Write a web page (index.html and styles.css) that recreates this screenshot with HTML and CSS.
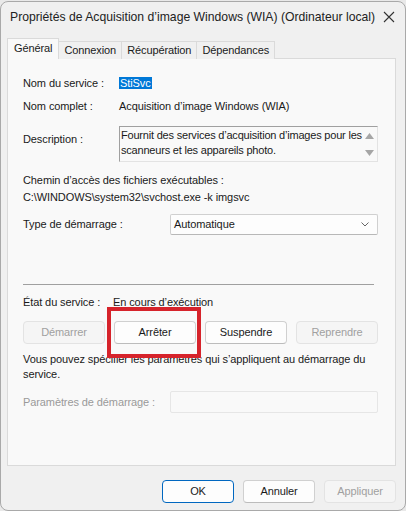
FILE: index.html
```html
<!DOCTYPE html>
<html>
<head>
  <meta charset='utf-8'>
  <title>Propriétés de Acquisition d'image Windows (WIA)</title>
<link rel="stylesheet" href="styles.css">
</head>
<body>
  <div class="window">
    <div class="titlebar">
      <span class="title">Propriétés de Acquisition d’image Windows (WIA) (Ordinateur local)</span>
      <svg class="close" width="12" height="12" viewBox="0 0 12 12"><path d="M1 1L11 11M11 1L1 11" stroke="#333" stroke-width="1.1" fill="none"/></svg>
    </div>
    <div class="tabs">
      <span class="tab active">Général</span>
      <span class="tab">Connexion</span>
      <span class="tab">Récupération</span>
      <span class="tab">Dépendances</span>
    </div>
    <div class="panel">
      <div class="row">
        <span class="label">Nom du service :</span>
        <span class="value"><span class="selected">StiSvc</span></span>
      </div>
      <div class="row">
        <span class="label">Nom complet :</span>
        <span class="value">Acquisition d’image Windows (WIA)</span>
      </div>
      <div class="row desc-row">
        <span class="label desc-label">Description :</span>
        <div class="textbox">
          <div class="textbox-text">Fournit des services d’acquisition d’images pour les scanneurs et les appareils photo.</div>
          <div class="scroll">
            <svg width="9" height="6" viewBox="0 0 9 6"><path d="M0 6L4.5 0L9 6Z" fill="#a6a6a6"/></svg>
            <svg width="9" height="6" viewBox="0 0 9 6"><path d="M0 0L4.5 6L9 0Z" fill="#a6a6a6"/></svg>
          </div>
        </div>
      </div>
      <div class="path">
        <div>Chemin d’accès des fichiers exécutables :</div>
        <div>C:\WINDOWS\system32\svchost.exe -k imgsvc</div>
      </div>
      <div class="row type-row">
        <span class="label wide">Type de démarrage :</span>
        <div class="select">
          <span>Automatique</span>
          <svg width="8" height="5" viewBox="0 0 8 5"><path d="M0.5 0.5L4 4L7.5 0.5" stroke="#666" stroke-width="1" fill="none"/></svg>
        </div>
      </div>
      <div class="separator"></div>
      <div class="row state-row">
        <span class="state-label">État du service :</span>
        <span>En cours d’exécution</span>
      </div>
      <div class="buttons">
        <span class="button disabled">Démarrer</span>
        <span class="button">Arrêter</span>
        <span class="button">Suspendre</span>
        <span class="button disabled">Reprendre</span>
        <div class="highlight"></div>
      </div>
      <p class="note">Vous pouvez spécifier les parametres qui s’appliquent au démarrage du service.</p>
      <div class="row param-row">
        <span class="label wide muted">Paramètres de démarrage :</span>
        <div class="input"></div>
      </div>
    </div>
    <div class="footer">
      <span class="button primary">OK</span>
      <span class="button">Annuler</span>
      <span class="button disabled">Appliquer</span>
    </div>
  </div>
</body>
</html>
```

FILE: styles.css
```css
body {
  margin: 0;
  background: #e9e9e9;
  font-family: "Liberation Sans", Arial, sans-serif;
  font-size: 11px;
  letter-spacing: -0.1px;
  color: #1a1a1a;
}
.window {
  box-sizing: border-box;
  width: 406px;
  height: 510px;
  margin-top: 1px;
  background: #f0f0f0;
  border: 1px solid #a9a9a9;
  border-radius: 8px;
  display: flex;
  flex-direction: column;
}
.titlebar {
  display: flex;
  align-items: center;
  justify-content: space-between;
  height: 30px;
  padding: 0 10px 0 9px;
}
.title {
  font-size: 12.2px;
  letter-spacing: 0;
  color: #222;
}
.tabs {
  display: flex;
  align-items: flex-end;
  height: 26px;
  margin-left: 6px;
}
.tab {
  box-sizing: border-box;
  height: 18px;
  padding: 0 5px;
  line-height: 17px;
  border: 1px solid #dadada;
  border-bottom: none;
  border-left: none;
  background: #f0f0f0;
  position: relative;
  top: 1px;
}
.tab.active {
  height: 21px;
  line-height: 18px;
  padding: 0 6px;
  border-left: 1px solid #dadada;
  background: #f9f9f9;
  z-index: 1;
}
.panel {
  box-sizing: border-box;
  height: 408px;
  margin: 0 9px 0 6px;
  padding: 17px 17px 0 15px;
  background: #f9f9f9;
  border: 1px solid #dadada;
}
.row {
  display: flex;
  align-items: center;
  line-height: 15px;
  margin-bottom: 8px;
}
.label {
  width: 96px;
  flex: none;
}
.label.wide {
  width: 147px;
}
.muted {
  color: #9a9a9a;
}
.selected {
  background: #0078d7;
  color: #fff;
  padding: 0 1px;
}
.desc-row {
  align-items: flex-start;
  margin-top: 12px;
}
.desc-label {
  padding-top: 6px;
}
.textbox {
  box-sizing: border-box;
  display: flex;
  width: 260px;
  height: 36px;
  border: 1px solid #a0a0a0;
  border-right-color: #e3e3e3;
  border-bottom-color: #e3e3e3;
  background: #f9f9f9;
}
.textbox-text {
  flex: 1;
  padding: 1px 0 1px 1px;
  line-height: 15px;
  letter-spacing: -0.2px;
}
.scroll {
  width: 15px;
  flex: none;
  display: flex;
  flex-direction: column;
  justify-content: space-between;
  align-items: center;
  padding: 6px 0 5px;
}
.path {
  line-height: 17px;
  margin-top: 10px;
}
.type-row {
  margin-top: 8px;
}
.select {
  box-sizing: border-box;
  flex: 1;
  height: 21px;
  display: flex;
  align-items: center;
  justify-content: space-between;
  padding: 0 8px 0 3px;
  background: #fdfdfd;
  border: 1px solid #d0d0d0;
  border-bottom-color: #b8b8b8;
  border-radius: 2px;
}
.separator {
  height: 1px;
  background: #a0a0a0;
  margin: 49px 4px 10px 0;
}
.state-row {
  margin-bottom: 11px;
}
.state-label {
  width: 90px;
}
.buttons {
  position: relative;
  display: flex;
  justify-content: space-between;
}
.button {
  box-sizing: border-box;
  width: 82px;
  height: 23px;
  line-height: 21px;
  text-align: center;
  background: #fdfdfd;
  border: 1px solid #d0d0d0;
  border-bottom-color: #bcbcbc;
  border-radius: 4px;
  color: #1a1a1a;
}
.button.disabled {
  background: #f5f5f5;
  border-color: #e3e3e3;
  color: #a0a0a0;
}
.button.primary {
  border-color: #0067c0;
}
.highlight {
  position: absolute;
  left: 84px;
  top: -14px;
  width: 94px;
  height: 51px;
  box-sizing: border-box;
  border: 4px solid #d6232b;
}
.note {
  margin: 8px 0 0;
  line-height: 15px;
}
.param-row {
  margin-top: 9px;
}
.input {
  box-sizing: border-box;
  flex: 1;
  height: 22px;
  background: #f9f9f9;
  border: 1px solid #e6e6e6;
  border-radius: 2px;
}
.footer {
  display: flex;
  justify-content: flex-end;
  gap: 9px;
  padding: 14px 9px 0 0;
}
.footer .button {
  width: 72px;
}
```
